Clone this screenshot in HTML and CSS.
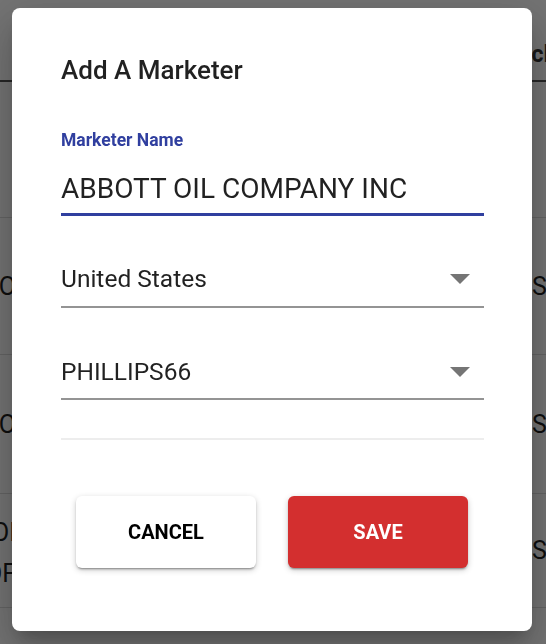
FILE: index.html
```html
<!DOCTYPE html>
<html lang="en">
<head>
<meta charset="utf-8">
<title>Add A Marketer</title>
<link rel="stylesheet" href="styles.css">
</head>
<body>
<div class="page">
  <div class="row head">
    <div class="cell left"></div>
    <div class="cell mid"></div>
    <div class="cell right"><span class="head-text">Include</span></div>
  </div>
  <div class="row r1">
    <div class="cell left"></div>
    <div class="cell mid"></div>
    <div class="cell right"></div>
  </div>
  <div class="row r2">
    <div class="cell left"><span>OCEAN CO</span></div>
    <div class="cell mid"></div>
    <div class="cell right"><span>SHELL</span></div>
  </div>
  <div class="row r3">
    <div class="cell left"><span>ECO CO</span></div>
    <div class="cell mid"></div>
    <div class="cell right"><span>SHELL</span></div>
  </div>
  <div class="row r4">
    <div class="cell left two"><span>ADAMS OI</span><span>CORPOF</span></div>
    <div class="cell mid"></div>
    <div class="cell right"><span>SUNOCO</span></div>
  </div>
  <div class="row r5">
    <div class="cell left"></div>
    <div class="cell mid"></div>
    <div class="cell right"></div>
  </div>
</div>

<div class="overlay">
  <div class="modal">
    <h2 class="title">Add A Marketer</h2>
    <div class="field">
      <div class="label">Marketer Name</div>
      <div class="input">ABBOTT OIL COMPANY INC</div>
    </div>
    <div class="select s1">
      <span>United States</span>
      <svg class="arrow" width="20" height="10" viewBox="0 0 20 10"><polygon points="0,0 20,0 10,10" fill="#757575"/></svg>
    </div>
    <div class="select s2">
      <span>PHILLIPS66</span>
      <svg class="arrow" width="20" height="10" viewBox="0 0 20 10"><polygon points="0,0 20,0 10,10" fill="#757575"/></svg>
    </div>
    <div class="empty"></div>
    <div class="actions">
      <button class="btn cancel">CANCEL</button>
      <button class="btn save">SAVE</button>
    </div>
  </div>
</div>
</body>
</html>
```

FILE: styles.css
```css
* { box-sizing: border-box; }
html, body {
  margin: 0;
  padding: 0;
  width: 546px;
  height: 644px;
  overflow: hidden;
  background: #ffffff;
  font-family: Roboto, "Noto Sans", sans-serif;
}

/* background table */
.page {
  display: flex;
  flex-direction: column;
  width: 546px;
  height: 644px;
  overflow: hidden;
}
.row {
  display: flex;
  align-items: center;
  flex: none;
  border-bottom: 1px solid #dcdcdc;
  font-size: 25px;
  color: #1e1e1e;
}
.head {
  height: 82px;
  align-items: flex-end;
  padding-bottom: 12px;
  border-bottom: 2px solid #555;
  font-size: 23px;
  font-weight: 700;
  color: #333;
}
.r1 { height: 136px; }
.r2 { height: 137px; }
.r3 { height: 139px; }
.r4 { height: 114px; }
.r5 { height: 36px; border-bottom: none; }
.cell { white-space: nowrap; }
.left {
  width: 16px;
  flex: none;
  display: flex;
  flex-direction: column;
  align-items: flex-end;
}
.left.two { line-height: 41px; padding-top: 5px; }
.mid { flex: 1; }
.right { width: 14px; flex: none; }
.head-text { margin-left: -20px; }

/* overlay + dialog */
.overlay {
  position: fixed;
  inset: 0;
  background: rgba(0, 0, 0, 0.55);
  padding: 8px 0 0 12px;
}
.modal {
  width: 520px;
  height: 623px;
  background: #fff;
  border-radius: 8px;
  padding: 47px 48px 0 49px;
  box-shadow: 0 11px 15px -7px rgba(0,0,0,.2), 0 24px 38px 3px rgba(0,0,0,.14), 0 9px 46px 8px rgba(0,0,0,.12);
  display: flex;
  flex-direction: column;
  color: rgba(0, 0, 0, 0.87);
}
.title {
  margin: 0;
  font-size: 26px;
  line-height: 30px;
  font-weight: 500;
}
.field { margin-top: 44px; }
.label {
  font-size: 17.5px;
  line-height: 22px;
  font-weight: 700;
  color: #303f9f;
}
.input {
  margin-top: 20.5px;
  font-size: 28px;
  line-height: 34px;
  padding-bottom: 7px;
  border-bottom: 3px solid #303f9f;
}
.select {
  display: flex;
  align-items: center;
  justify-content: space-between;
  font-size: 24.5px;
  line-height: 30px;
  border-bottom: 2px solid #949494;
}
.s1 { margin-top: 48.5px; padding-bottom: 12px; }
.s2 { margin-top: 49px; padding-bottom: 11px; }
.arrow { margin-right: 14px; }
.empty {
  height: 40px;
  border-bottom: 2px solid #ededed;
}
.actions {
  margin-top: 56px;
  display: flex;
  justify-content: center;
  gap: 32px;
  margin-left: -1px;
}
.btn {
  width: 180px;
  height: 72px;
  border: none;
  border-radius: 6px;
  font-family: Roboto, sans-serif;
  font-size: 20px;
  font-weight: 700;
  box-shadow: 0 3px 1px -2px rgba(0,0,0,.2), 0 2px 2px 0 rgba(0,0,0,.14), 0 2px 6px 0 rgba(0,0,0,.2);
}
.cancel { background: #fff; color: #000; }
.save { background: #d32f2f; color: #fff; }
```
